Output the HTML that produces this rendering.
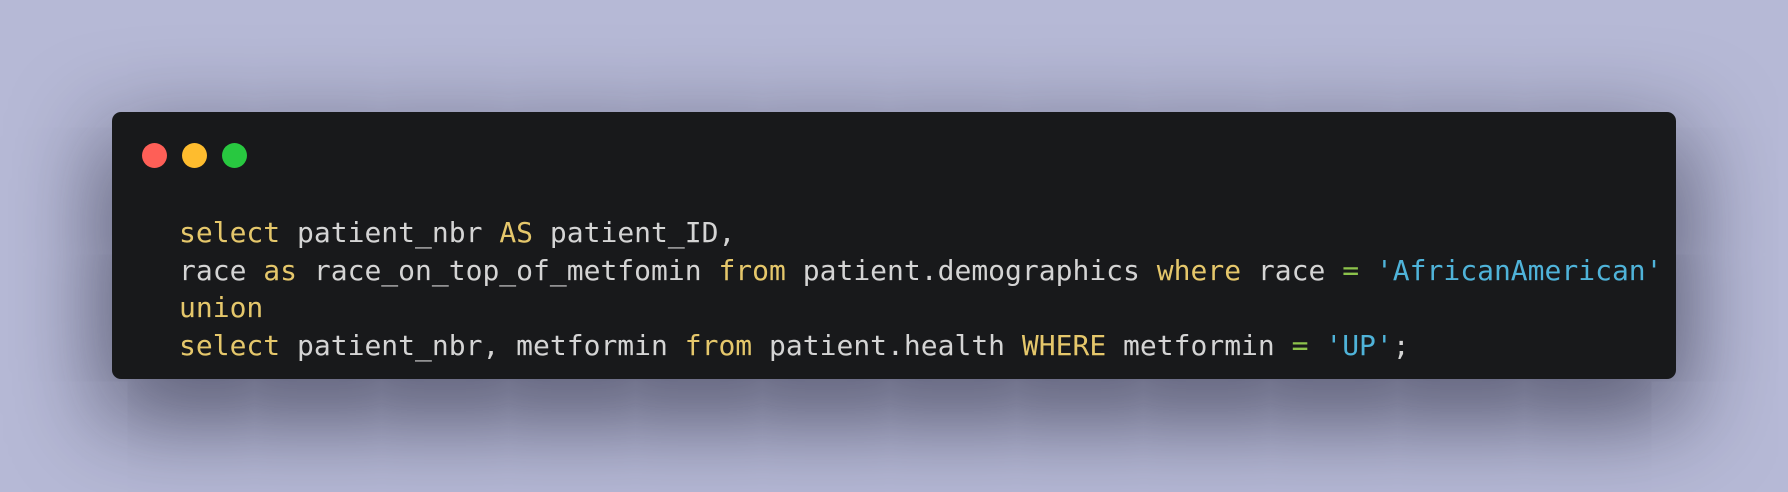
<!DOCTYPE html>
<html><head><style>
html,body{margin:0;padding:0;width:1788px;height:492px;overflow:hidden;background:#b6b9d6;}
.win{position:absolute;left:112px;top:112px;width:1564px;height:267px;background:#18191b;border-radius:9px;box-shadow:0 30px 90px 10px rgba(20,20,40,0.6);}
.dot{position:absolute;top:143px;width:25px;height:25px;border-radius:50%;}
pre{position:absolute;left:179px;top:214px;margin:0;font-family:"DejaVu Sans Mono","Liberation Mono",monospace;font-size:28px;line-height:37.5px;color:#d4d4d4;}
.k{color:#e5c76b}.s{color:#4fb3d9}.o{color:#8cc34b}
</style></head><body>
<div class="win"></div>
<div class="dot" style="left:142px;background:#fe5f57"></div>
<div class="dot" style="left:182px;background:#febc2e"></div>
<div class="dot" style="left:222px;background:#28c840"></div>
<pre><span class="k">select</span> patient_nbr <span class="k">AS</span> patient_ID,
race <span class="k">as</span> race_on_top_of_metfomin <span class="k">from</span> patient.demographics <span class="k">where</span> race <span class="o">=</span> <span class="s">'AfricanAmerican'</span>
<span class="k">union</span>
<span class="k">select</span> patient_nbr, metformin <span class="k">from</span> patient.health <span class="k">WHERE</span> metformin <span class="o">=</span> <span class="s">'UP'</span>;</pre>
</body></html>
